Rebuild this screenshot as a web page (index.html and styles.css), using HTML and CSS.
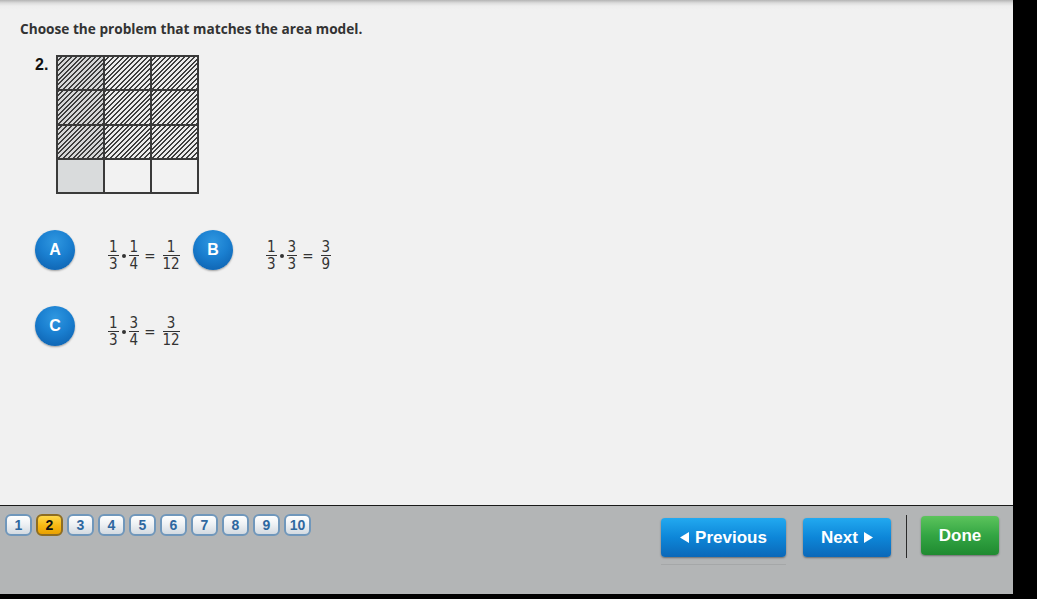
FILE: index.html
```html
<!DOCTYPE html>
<html>
<head>
<meta charset="utf-8">
<link rel="stylesheet" href="styles.css">
</head>
<body>
<div class="screen">
  <main class="content">
    <h1 class="title">Choose the problem that matches the area model.</h1>
    <div class="question">
      <span class="qnum">2.</span>
      <div class="grid">
        <div class="cell hatch dark"></div><div class="cell hatch"></div><div class="cell hatch"></div>
        <div class="cell hatch dark"></div><div class="cell hatch"></div><div class="cell hatch"></div>
        <div class="cell hatch dark"></div><div class="cell hatch"></div><div class="cell hatch"></div>
        <div class="cell shaded"></div><div class="cell"></div><div class="cell"></div>
      </div>
    </div>
    <div class="options">
      <div class="option">
        <span class="bubble">A</span>
        <span class="eq">
          <span class="frac"><span class="num">1</span><span class="den">3</span></span>
          <span class="dot"></span>
          <span class="frac"><span class="num">1</span><span class="den">4</span></span>
          <span class="equals">=</span>
          <span class="frac"><span class="num">1</span><span class="den">12</span></span>
        </span>
      </div>
      <div class="option">
        <span class="bubble">B</span>
        <span class="eq">
          <span class="frac"><span class="num">1</span><span class="den">3</span></span>
          <span class="dot"></span>
          <span class="frac"><span class="num">3</span><span class="den">3</span></span>
          <span class="equals">=</span>
          <span class="frac"><span class="num">3</span><span class="den">9</span></span>
        </span>
      </div>
      <div class="option">
        <span class="bubble">C</span>
        <span class="eq">
          <span class="frac"><span class="num">1</span><span class="den">3</span></span>
          <span class="dot"></span>
          <span class="frac"><span class="num">3</span><span class="den">4</span></span>
          <span class="equals">=</span>
          <span class="frac"><span class="num">3</span><span class="den">12</span></span>
        </span>
      </div>
    </div>
  </main>
  <footer class="footer">
    <nav class="pages">
      <span class="page">1</span>
      <span class="page active">2</span>
      <span class="page">3</span>
      <span class="page">4</span>
      <span class="page">5</span>
      <span class="page">6</span>
      <span class="page">7</span>
      <span class="page">8</span>
      <span class="page">9</span>
      <span class="page">10</span>
    </nav>
    <div class="actions">
      <div class="btn-wrap">
        <button class="btn blue prev"><svg class="tri" width="9" height="11" viewBox="0 0 9 11"><path d="M9 0 L9 11 L0 5.5 Z" fill="#fff"/></svg><span>Previous</span></button>
      </div>
      <button class="btn blue next"><span>Next</span><svg class="tri" width="9" height="11" viewBox="0 0 9 11"><path d="M0 0 L0 11 L9 5.5 Z" fill="#fff"/></svg></button>
      <span class="sep"></span>
      <button class="btn green done">Done</button>
    </div>
  </footer>
</div>
</body>
</html>
```

FILE: styles.css
```css
* { box-sizing: border-box; }
html, body { margin: 0; padding: 0; }
body {
  background: #000;
  width: 1037px;
  height: 599px;
  overflow: hidden;
  font-family: "Liberation Sans", Arial, sans-serif;
}
.screen {
  width: 1013px;
  height: 594px;
  display: flex;
  flex-direction: column;
}
.content {
  flex: 1;
  background: linear-gradient(to bottom, #b4b4b4 0px, #dcdcdc 3px, #eeeeee 6px, #f1f1f1 10px) #f1f1f1;
  padding: 19px 0 0 20px;
}
.title {
  margin: 0;
  font-family: "Open Sans", sans-serif;
  font-weight: 700;
  font-size: 13.65px;
  line-height: 20px;
  color: #333;
}
.question {
  display: flex;
  align-items: flex-start;
  margin-top: 16px;
  padding-left: 15px;
}
.qnum {
  font-weight: 700;
  font-size: 16px;
  color: #111;
  line-height: 18px;
  margin-top: 1px;
  width: 21px;
}
.grid {
  display: grid;
  grid-template-columns: repeat(3, 1fr);
  grid-template-rows: repeat(4, 1fr);
  gap: 2px;
  background: #3a3a3a;
  border: 2px solid #3a3a3a;
  width: 143px;
  height: 139px;
}
.cell { background: #f2f2f2; }
.cell.shaded { background: #d9dbdc; }
.cell.hatch {
  background: repeating-linear-gradient(-45deg, #3e3e3e 0px, #3e3e3e 1.4px, #ececec 1.4px, #ececec 3.4px);
}
.cell.hatch.dark {
  background: repeating-linear-gradient(-45deg, #3e3e3e 0px, #3e3e3e 1.4px, #d6d7d8 1.4px, #d6d7d8 3.4px);
}
.options {
  display: grid;
  grid-template-columns: 158px 158px;
  row-gap: 36px;
  margin-top: 36px;
  padding-left: 15px;
}
.option {
  display: flex;
  align-items: center;
  height: 40px;
}
.bubble {
  width: 40px;
  height: 40px;
  border-radius: 50%;
  background: radial-gradient(circle at 50% 30%, #2f97e0 0%, #1a7fd0 45%, #0b5ba8 100%);
  box-shadow: 0 1px 2px rgba(0,0,0,0.35);
  color: #fff;
  font-weight: 700;
  font-size: 16px;
  display: flex;
  align-items: center;
  justify-content: center;
  flex-shrink: 0;
}
.eq {
  display: flex;
  align-items: center;
  margin-left: 33px;
  color: #333;
  font-family: "DejaVu Sans Condensed", "Liberation Sans", sans-serif;
  font-size: 15px;
  margin-top: 12px;
}
.frac {
  display: inline-flex;
  flex-direction: column;
  align-items: center;
  line-height: 13px;
}
.num {
  border-bottom: 1.5px solid #333;
  padding: 0 1px 1px;
  align-self: stretch;
  text-align: center;
}
.den { padding-top: 2px; }
.dot {
  width: 4px;
  height: 4px;
  border-radius: 50%;
  background: #333;
  margin: 0 3px 0 3px;
}
.equals { margin: 0 7px 0 5px; font-size: 15px; line-height: 14px; }

.footer {
  height: 89px;
  background: #b3b5b6;
  border-top: 1px solid #1a1a1a;
  display: flex;
  justify-content: space-between;
  padding: 8px 14px 0 5px;
}
.pages {
  display: flex;
  gap: 4px;
  align-items: flex-start;
}
.page {
  width: 27px;
  height: 22px;
  border: 2px solid #7097bb;
  border-radius: 6px;
  background: linear-gradient(to bottom, #ffffff 0%, #eef1f4 45%, #d3dae1 100%);
  color: #2f68a0;
  font-weight: 700;
  font-size: 14px;
  display: flex;
  align-items: center;
  justify-content: center;
  line-height: 1;
}
.page.active {
  background: linear-gradient(to bottom, #ffd84a 0%, #f7b712 55%, #e9a100 100%);
  border-color: #8e6d22;
  color: #111;
}
.actions {
  display: flex;
  align-items: flex-start;
  padding-top: 4px;
}
.btn {
  border: none;
  font-family: "Liberation Sans", Arial, sans-serif;
  font-weight: 700;
  font-size: 17px;
  color: #fff;
  border-radius: 4px;
  height: 39px;
  padding: 0;
  box-shadow: 0 1px 2px rgba(0,0,0,0.4);
  display: flex;
  align-items: center;
  justify-content: center;
  gap: 6px;
}
.blue {
  background: linear-gradient(to bottom, #22a9f0 0%, #0d86d8 50%, #0b68b8 100%);
}
.btn-wrap {
  padding-bottom: 7px;
  border-bottom: 1px solid #a5a7a8;
  width: 125px;
}
.prev { width: 125px; }
.next { width: 88px; margin-left: 17px; }
.sep {
  width: 1px;
  height: 43px;
  background: #2a2a2a;
  margin: -3px 14px 0 15px;
}
.green {
  background: linear-gradient(to bottom, #5cc45c 0%, #33a543 50%, #1f8a30 100%);
  width: 78px;
  margin-top: -2px;
  height: 39px;
}
```
